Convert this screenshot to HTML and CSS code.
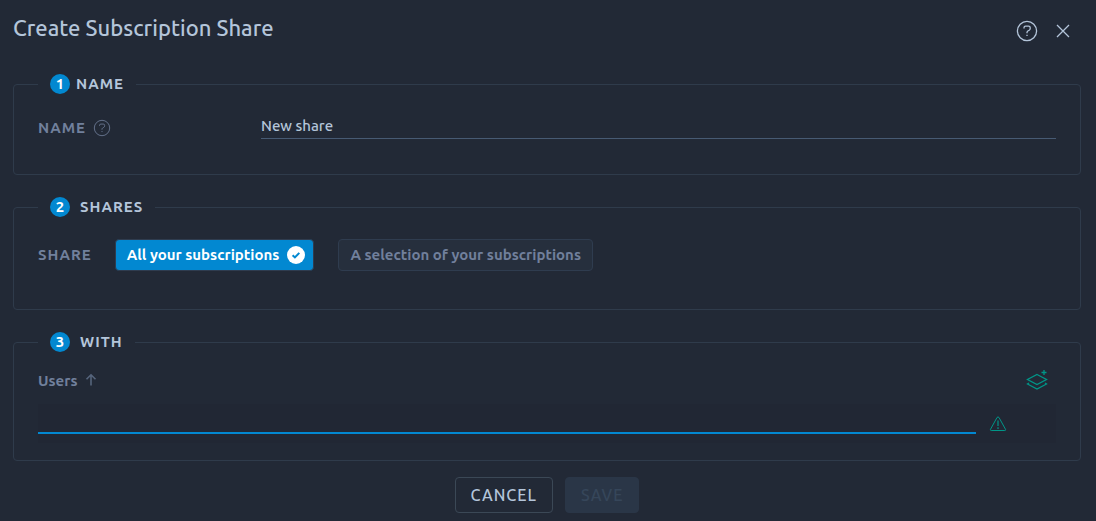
FILE: index.html
```html
<!DOCTYPE html>
<html lang="en">
<head>
<meta charset="utf-8">
<title>Create Subscription Share</title>
<link rel="stylesheet" href="styles.css">
</head>
<body>
<form class="dialog">
  <header class="dialog-header">
    <h1 class="title">Create Subscription Share</h1>
    <div class="header-actions">
      <button type="button" class="icon-button" aria-label="Help">
        <svg width="22" height="22" viewBox="0 0 22 22"><circle cx="11" cy="11" r="9.6"/><path d="M8 8.6V7.8Q8 6.2 9.6 6.2h3Q14.2 6.2 14.2 7.8V8.5Q14.2 9.6 13.2 10.2L11.8 11Q11 11.5 11 12.6V13.2M11 14.7v1.3"/></svg>
      </button>
      <button type="button" class="icon-button" aria-label="Close">
        <svg width="22" height="22" viewBox="0 0 22 22"><path d="M5 5l12 12M17 5L5 17"/></svg>
      </button>
    </div>
  </header>

  <fieldset class="section">
    <legend class="legend legend-tight"><span class="badge">1</span>NAME</legend>
    <div class="name-row">
      <label class="field-label" for="share-name">NAME
        <svg width="18" height="18" viewBox="0 0 22 22"><circle cx="11" cy="11" r="9.4"/><path d="M8 8.6V7.8Q8 6.2 9.6 6.2h3Q14.2 6.2 14.2 7.8V8.5Q14.2 9.6 13.2 10.2L11.8 11Q11 11.5 11 12.6V13.2M11 14.7v1.3"/></svg>
      </label>
      <input class="text-input" id="share-name" type="text" value="New share">
    </div>
  </fieldset>

  <fieldset class="section">
    <legend class="legend"><span class="badge">2</span>SHARES</legend>
    <div class="share-row" role="group" aria-labelledby="share-label">
      <span class="field-label" id="share-label">SHARE</span>
      <div class="choices">
        <button type="button" class="choice choice-active" aria-pressed="true">All your subscriptions
          <svg width="18" height="18" viewBox="0 0 18 18"><circle cx="9" cy="9" r="9" fill="#fff"/><path d="M5.6 9.2l2.3 2.2 4.4-4.5" fill="none" stroke="#0288d1" stroke-width="2"/></svg>
        </button>
        <button type="button" class="choice" aria-pressed="false">A selection of your subscriptions</button>
      </div>
    </div>
  </fieldset>

  <fieldset class="section">
    <legend class="legend"><span class="badge">3</span>WITH</legend>
    <div class="users-head">
      <label class="users-label" for="users">Users
        <svg width="12" height="14" viewBox="0 0 12 14"><path d="M6 12.5V2M1.5 6.3L6 1.8l4.5 4.5"/></svg>
      </label>
      <button type="button" class="icon-button add" aria-label="Add users">
        <svg width="24" height="24" viewBox="0 0 24 24"><path d="M12 6.5L21.5 11.5L12 16.5L2.5 11.5zM4 15L2.5 16L12 21L21.5 16L20 15M19 2v5M16.5 4.5h5"/></svg>
      </button>
    </div>
    <div class="users-row">
      <input class="users-input" id="users" type="text">
      <svg class="warning" width="18" height="16" viewBox="0 0 18 16" role="img" aria-label="Required"><path d="M8 1.5Q9 .3 10 1.5L16.6 13.5Q16.8 14.5 15.8 14.5H2.2Q1.2 14.5 1.4 13.5z"/><path class="mark" d="M9 4.5v5.5M9 11.2v1.8"/></svg>
    </div>
  </fieldset>

  <footer class="dialog-footer">
    <button type="button" class="action cancel">CANCEL</button>
    <button type="submit" class="action save" disabled>SAVE</button>
  </footer>
</form>
</body>
</html>
```
FILE: styles.css
```css
* {
  box-sizing: border-box;
}

body {
  margin: 0;
  background: #222936;
  color: #b4c5da;
  font-family: Ubuntu, "Noto Sans", sans-serif;
  font-size: 15px;
  font-weight: 500;
}

button,
input {
  font: inherit;
  color: inherit;
}

svg {
  display: block;
  flex: none;
  fill: none;
  stroke: currentColor;
}

.dialog {
  padding: 0 15px 8px 13px;
}

.dialog-header {
  display: flex;
  justify-content: space-between;
  align-items: flex-start;
  height: 74px;
  padding-top: 14px;
}

.title {
  margin: 0;
  font-size: 22px;
  line-height: 28px;
  font-weight: 500;
}

.header-actions {
  display: flex;
  gap: 14px;
  padding: 6px 7px 0 0;
}

.icon-button {
  padding: 0;
  border: 0;
  background: none;
  stroke-width: 1.3;
}

.section {
  min-width: 0;
  margin: 0 0 22px;
  padding: 0 24px 35px;
  border: 1px solid #2f3b4b;
  border-radius: 4px;
}

.legend {
  display: flex;
  align-items: center;
  gap: 10px;
  height: 20px;
  padding: 0 12px;
  font-weight: 600;
  line-height: 20px;
  letter-spacing: 1px;
}

.legend-tight {
  gap: 6px;
}

.badge {
  width: 20px;
  height: 20px;
  border-radius: 50%;
  background: #0288d1;
  color: #fff;
  letter-spacing: 0;
  text-align: center;
}

.name-row {
  display: grid;
  grid-template-columns: 223px 1fr;
  padding-top: 21px;
}

.field-label {
  display: flex;
  align-items: center;
  gap: 7px;
  color: #71809c;
  font-weight: 600;
  line-height: 20px;
  letter-spacing: 1px;
}

.name-row .field-label {
  padding-top: 2px;
}

.text-input {
  min-width: 0;
  height: 24px;
  padding: 0 0 2px;
  border: 0;
  border-bottom: 1px solid #475a73;
  border-radius: 0;
  outline: 0;
  background: none;
}

.share-row {
  display: flex;
  align-items: center;
  gap: 23px;
  padding: 22px 0 3px;
}

.choices {
  display: flex;
  gap: 24px;
}

.choice {
  display: flex;
  align-items: center;
  gap: 8px;
  height: 32px;
  padding: 0 11px;
  border: 1px solid #2f3c4f;
  border-radius: 4px;
  background: #262f3d;
  color: #71809c;
  font-weight: 600;
  line-height: 20px;
}

.choice-active {
  padding-right: 8px;
  background: #0288d1;
  color: #fff;
}

.choice svg {
  stroke: none;
}

.users-head {
  display: flex;
  justify-content: space-between;
  align-items: center;
  padding: 16px 7px 12px 0;
}

.users-label {
  display: flex;
  align-items: center;
  gap: 8px;
  color: #71809c;
  font-weight: 600;
}

.users-label svg {
  color: #56647c;
  stroke-width: 1.6;
}

.add,
.warning {
  color: #009688;
}

.mark {
  opacity: 0.6;
  stroke-width: 2;
}

.users-row {
  display: flex;
  align-items: center;
  gap: 13px;
  height: 39px;
  margin-bottom: -18px;
  padding-right: 49px;
  background: #212734;
}

.users-input {
  flex: 1;
  min-width: 0;
  height: 20px;
  padding: 0;
  border: 0;
  border-bottom: 2px solid #0288d1;
  outline: 0;
  background: none;
}

.dialog-footer {
  display: flex;
  justify-content: center;
  gap: 12px;
  margin-top: -6px;
}

.action {
  height: 36px;
  padding: 0 15px;
  border: 1px solid #3b4856;
  border-radius: 4px;
  background: none;
  font-size: 16px;
  letter-spacing: 1px;
}

.save {
  border-color: #2a3647;
  background: #2a3647;
  color: #36465a;
}
```
